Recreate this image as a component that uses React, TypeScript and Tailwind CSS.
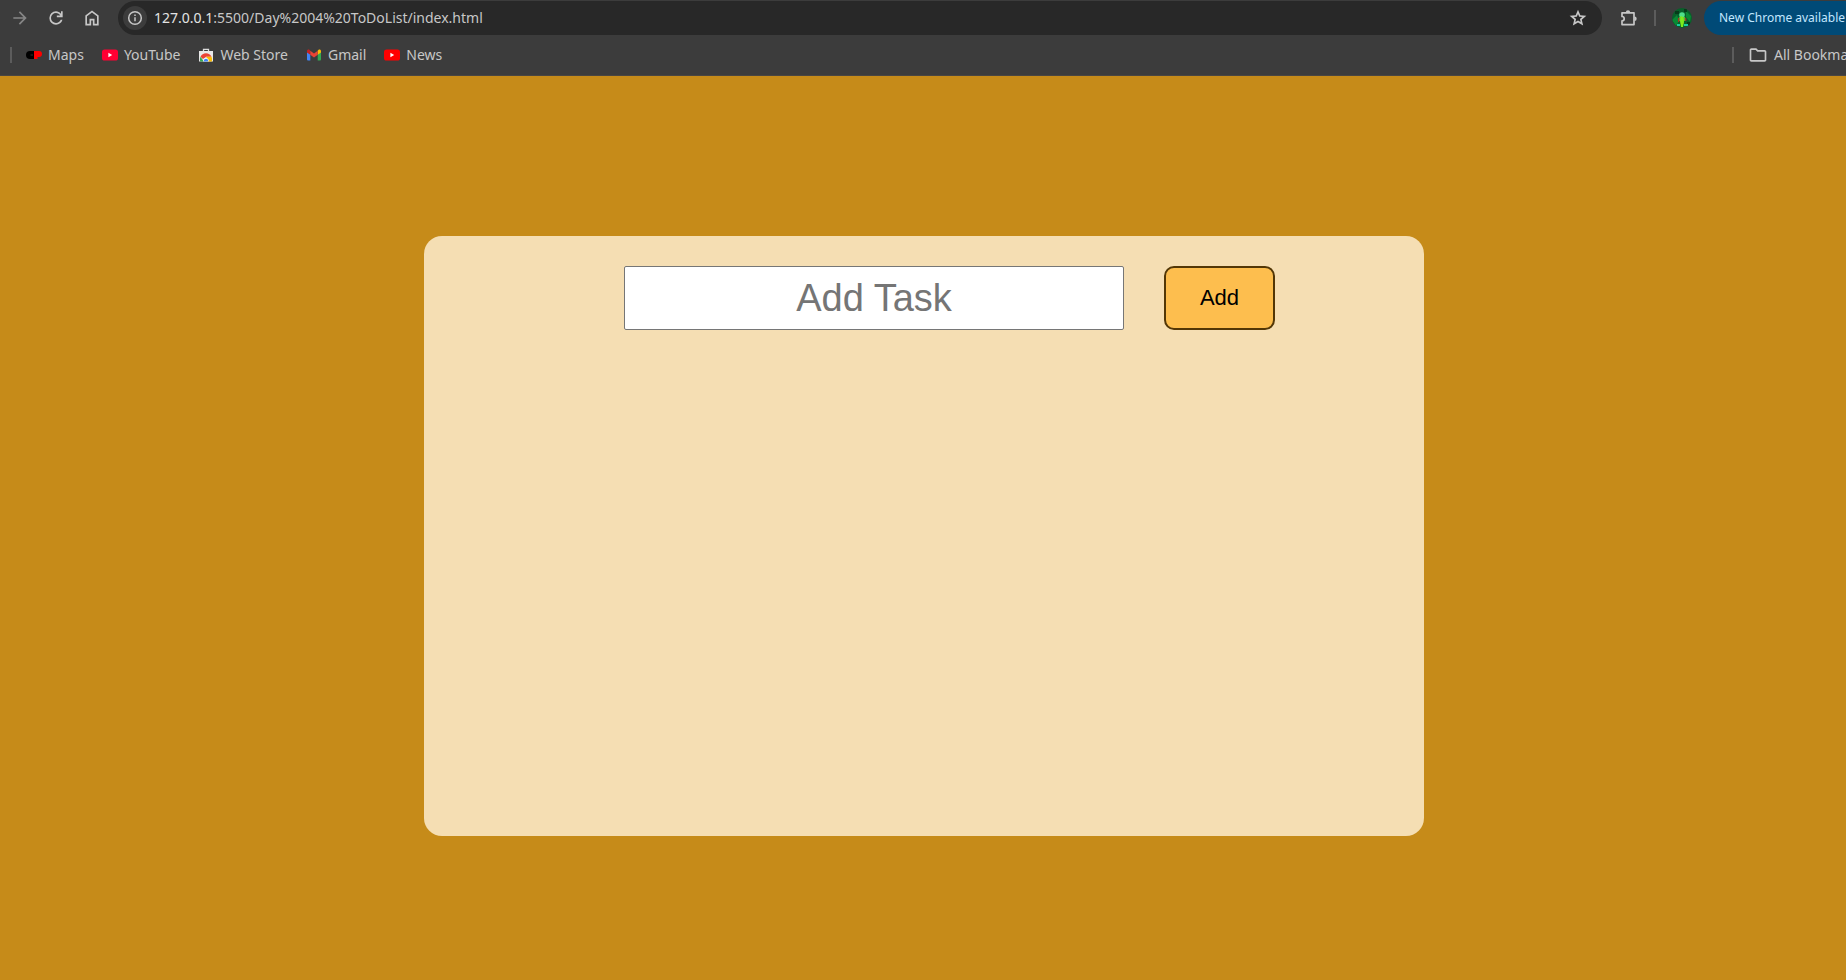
import type { ReactNode } from "react";

type SymbolProps = { d: string; className?: string };

function Glyph({ d, className = "size-5" }: SymbolProps) {
  return (
    <svg viewBox="0 -960 960 960" fill="currentColor" className={className} aria-hidden="true">
      <path d={d} />
    </svg>
  );
}

const forward = "M647-440H160v-80h487L423-744l57-56 320 320-320 320-57-56 224-224Z";
const reload =
  "M480-160q-134 0-227-93t-93-227q0-134 93-227t227-93q69 0 132 28.5T720-690v-110h80v280H520v-80h168q-32-56-87.5-88T480-720q-100 0-170 70t-70 170q0 100 70 170t170 70q77 0 139-44t87-116h84q-28 106-114 173t-196 67Z";
const home =
  "M240-200h120v-240h240v240h120v-360L480-740 240-560v360Zm-80 80v-480l320-240 320 240v480H520v-240h-80v240H160Z";
const star =
  "m354-287 126-76 126 77-33-144 111-96-146-13-58-136-58 135-146 13 111 97-33 143ZM233-120l65-281L80-590l288-25 112-265 112 265 288 25-218 189 65 281-247-149-247 149Z";
const folder =
  "M160-160q-33 0-56.5-23.5T80-240v-480q0-33 23.5-56.5T160-800h240l80 80h320q33 0 56.5 23.5T880-640v400q0 33-23.5 56.5T800-160H160Zm0-80h640v-400H447l-80-80H160v480Z";

function InfoIcon() {
  return (
    <svg viewBox="0 0 16 16" className="size-4" fill="none" stroke="currentColor" strokeWidth="1.5" aria-hidden="true">
      <circle cx="8" cy="8" r="6.3" />
      <path d="M8 7.2v4M8 4.6v1.5" />
    </svg>
  );
}

function PuzzleIcon() {
  return (
    <svg viewBox="0 0 18 18" className="size-[18px]" aria-hidden="true">
      <path
        d="M2 3.800h12v11.800H2v-3.700a2.200 2.200 0 0 0 0-4.400z"
        fill="none"
        stroke="currentColor"
        strokeWidth="1.700"
        strokeLinejoin="round"
      />
      <path d="M5.800 3.500a2.200 2.200 0 0 1 4.400 0zM14.500 7.500a2.200 2.200 0 0 1 0 4.400z" fill="currentColor" />
    </svg>
  );
}

function MapsIcon() {
  return (
    <svg viewBox="0 0 16 16" className="size-4" aria-hidden="true">
      <path d="M4 4h4.5v8H4a4 4 0 0 1 0-8z" fill="#000" />
      <path d="M8 4h5a3 3 0 0 1 0 6h-1.5v2H8z" fill="#f00" />
      <path d="M4.5 8H7" stroke="#333" strokeWidth="1" />
    </svg>
  );
}

function PlayIcon({ fill }: { fill: string }) {
  return (
    <svg viewBox="0 0 16 16" className="size-4" aria-hidden="true">
      <rect y="2.5" width="16" height="11" rx="2.6" fill={fill} />
      <path d="M6.4 5.8v4.4L10.2 8z" fill="#fff" />
    </svg>
  );
}

function StoreIcon() {
  return (
    <svg viewBox="0 0 16 16" className="size-4" aria-hidden="true">
      <path d="M5.500 4.500V2.300h5v2.200" fill="none" stroke="#ddd" strokeWidth="1.300" />
      <path d="M1 4h14v10.500H1z" fill="#e8e8e8" />
      <path d="M2.500 9.800a6 6 0 0 1 11 0H8.200L5 12z" fill="#ea4335" />
      <path d="M2.500 9.800 5.800 14.500H2.200a6 6 0 0 1 .3-4.700z" fill="#34a853" />
      <path d="M8.500 9.800h5a6 6 0 0 1 .3 4.700H9z" fill="#fbbc04" />
      <path d="M5.300 14.500a2.800 2.800 0 1 1 5.400 0z" fill="#fff" />
      <path d="M5.900 14.500a2.200 2.200 0 1 1 4.200 0z" fill="#4285f4" />
    </svg>
  );
}

function GmailIcon() {
  return (
    <svg viewBox="0 0 16 16" className="size-4" aria-hidden="true">
      <path d="M1 5v7.500a1 1 0 0 0 1 1h2.300V7z" fill="#4285f4" />
      <path d="M15 5v7.500a1 1 0 0 1-1 1h-2.300V7z" fill="#34a853" />
      <path d="M11.700 3.800v4L15 5.400V4.200c0-1.500-1.600-2-2.600-1.200z" fill="#fbbc04" />
      <path d="M1 4.200v1.200l3.300 2.400v-4L3.600 3C2.600 2.200 1 2.700 1 4.200z" fill="#c5221f" />
      <path d="M4.300 3.800 8 6.600l3.700-2.800v4L8 10.600 4.300 7.800z" fill="#ea4335" />
    </svg>
  );
}

function Avatar() {
  return (
    <svg viewBox="0 0 20 20" className="size-5 rounded-full" aria-hidden="true">
      <rect width="20" height="20" fill="#08602a" />
      <path d="M0 12 5 7l2 6-3 5zM14 3l5 5-1 6-4-5z" fill="#0a8a34" />
      <path d="M3 3h4v3H3zM15 14h3v3h-3zM12 1h3v3h-3z" fill="#043c1a" />
      <circle cx="10" cy="7" r="2.800" fill="#4de08a" />
      <path d="M7 9h6l1 4H6z" fill="#58b33c" />
      <path d="m8.500 8 3 1 .5 5-1 5H9l-1-6z" fill="#7eea1c" />
      <path d="M6 10h1.300v4H6zM13 10h1.300v3H13z" fill="#a03a24" />
      <path d="M5 16h3v2H5zM12 16h4v2h-4z" fill="#18d0a0" />
    </svg>
  );
}

function Bookmark({ icon, label }: { icon: ReactNode; label: string }) {
  return (
    <a href="#" className="flex shrink-0 items-center gap-1.5">
      {icon}
      <span>{label}</span>
    </a>
  );
}

function BrowserBar() {
  return (
    <header className="overflow-hidden border-b border-[#4a4642] bg-[#3c3c3c] font-['Noto_Sans',sans-serif] text-[#c7c7c7]">
      <div className="flex h-9 items-center pl-2.5">
        <nav className="flex items-center gap-4" aria-label="Navigation">
          <button aria-label="Forward" className="text-[#868686]"><Glyph d={forward} /></button>
          <button aria-label="Reload"><Glyph d={reload} /></button>
          <button aria-label="Home"><Glyph d={home} /></button>
        </nav>
        <div className="ml-4 flex h-[34px] min-w-0 flex-1 items-center rounded-full bg-[#282828] pr-3.5 pl-[5px]">
          <button aria-label="Site information" className="flex size-6 shrink-0 items-center justify-center rounded-full bg-[#3c3c3c]">
            <InfoIcon />
          </button>
          <p className="ml-[7px] flex-1 truncate text-sm">
            <span className="text-[#e3e3e3]">127.0.0.1</span>:5500/Day%2004%20ToDoList/index.html
          </p>
          <button aria-label="Bookmark this page"><Glyph d={star} /></button>
        </div>
        <button aria-label="Extensions" className="ml-[18px]"><PuzzleIcon /></button>
        <span className="ml-4 h-4 w-0.5 bg-[#5c5c5c]" />
        <button aria-label="Profile" className="ml-4"><Avatar /></button>
        <button className="ml-3 h-[34px] w-[142px] shrink-0 overflow-hidden rounded-l-full bg-[#004a77] pl-[15px] text-left text-xs whitespace-nowrap text-[#c2e7ff]">
          New Chrome available
        </button>
      </div>
      <div className="flex h-[39px] items-center pb-0.5 pl-2.5 text-sm">
        <span className="h-4 w-0.5 bg-[#5c5c5c]" />
        <nav className="ml-3.5 flex items-center gap-[18px]" aria-label="Bookmarks">
          <Bookmark icon={<MapsIcon />} label="Maps" />
          <Bookmark icon={<PlayIcon fill="#ff0033" />} label="YouTube" />
          <Bookmark icon={<StoreIcon />} label="Web Store" />
          <Bookmark icon={<GmailIcon />} label="Gmail" />
          <Bookmark icon={<PlayIcon fill="#ff0000" />} label="News" />
        </nav>
        <span className="ml-auto h-4 w-0.5 shrink-0 bg-[#5c5c5c]" />
        <a href="#" className="ml-3.5 flex w-[98px] shrink-0 items-center gap-1.5 overflow-hidden whitespace-nowrap">
          <Glyph d={folder} className="size-5 shrink-0" />
          <span>All Bookmarks</span>
        </a>
      </div>
    </header>
  );
}

export default function App() {
  return (
    <div className="flex min-h-screen flex-col bg-[#c68b19]">
      <BrowserBar />
      <main className="flex flex-1 justify-center pt-40 pr-6 pb-36 pl-[26px] font-['Liberation_Sans',sans-serif]">
        <section className="w-full max-w-[1000px] rounded-[18px] bg-[#f5deb3]">
          <form className="flex justify-center gap-10 pt-[30px] pl-[51px]" onSubmit={(e) => e.preventDefault()}>
            <input
              type="text"
              aria-label="Task"
              placeholder="Add Task"
              className="h-16 w-[500px] min-w-0 rounded-[2px] border border-[#767676] bg-white text-center text-[38px] text-black placeholder:text-[#757575]"
            />
            <button className="h-16 w-[111px] shrink-0 rounded-[10px] border-2 border-[#533706] bg-[#fdbe4e] pb-0.5 text-[22px] text-black">
              Add
            </button>
          </form>
        </section>
      </main>
    </div>
  );
}
